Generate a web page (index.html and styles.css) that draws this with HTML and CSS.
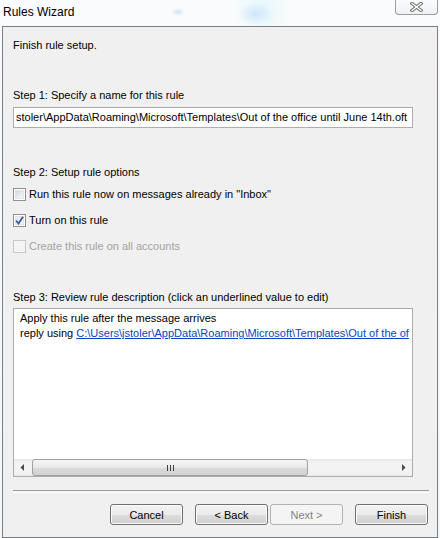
FILE: index.html
```html
<!DOCTYPE html>
<html lang="en">
<head>
  <meta charset="UTF-8">
  <title>Rules Wizard</title>
  <link rel="stylesheet" href="styles.css">
</head>
<body>

<div class="window">
  <div class="titlebar">
    <span class="title">Rules Wizard</span>
    <div class="close-btn">
      <svg width="13" height="10" viewBox="0 0 13 10">
        <path d="M2 1.5 L11 8.5 M11 1.5 L2 8.5" stroke="#6e6e6e" stroke-width="3.4" stroke-linecap="square"/>
        <path d="M2 1.5 L11 8.5 M11 1.5 L2 8.5" stroke="#ffffff" stroke-width="1.4" stroke-linecap="square"/>
      </svg>
    </div>
  </div>

  <div class="client">
    <p class="intro">Finish rule setup.</p>

    <div class="step-label step1">Step 1: Specify a name for this rule</div>
    <div class="textbox">stoler\AppData\Roaming\Microsoft\Templates\Out of the office until June 14th.oft</div>

    <div class="step-label step2">Step 2: Setup rule options</div>
    <div class="options">
      <label class="check-row">
        <span class="checkbox"></span>
        <span>Run this rule now on messages already in "Inbox"</span>
      </label>
      <label class="check-row">
        <span class="checkbox checked">
          <svg width="9" height="9" viewBox="0 0 9 9">
            <path d="M1 4.5 L3.5 7.5 L8 0.8" fill="none" stroke="#3d5a99" stroke-width="1.8"/>
          </svg>
        </span>
        <span>Turn on this rule</span>
      </label>
      <label class="check-row disabled">
        <span class="checkbox"></span>
        <span>Create this rule on all accounts</span>
      </label>
    </div>

    <div class="step-label step3">Step 3: Review rule description (click an underlined value to edit)</div>
    <div class="desc-box">
      <div class="desc-text">
        <div>Apply this rule after the message arrives</div>
        <div>reply using <a href="#">C:\Users\jstoler\AppData\Roaming\Microsoft\Templates\Out of the of</a></div>
      </div>
      <div class="hscroll">
        <div class="arrow-btn">
          <svg width="5" height="7" viewBox="0 0 5 7"><path d="M4 0 L0.5 3.5 L4 7 Z" fill="#4a4a4a"/></svg>
        </div>
        <div class="track">
          <div class="thumb">
            <span class="grip"></span><span class="grip"></span><span class="grip"></span>
          </div>
        </div>
        <div class="arrow-btn">
          <svg width="5" height="7" viewBox="0 0 5 7"><path d="M1 0 L4.5 3.5 L1 7 Z" fill="#4a4a4a"/></svg>
        </div>
      </div>
    </div>

    <div class="separator"></div>

    <div class="button-row">
      <button class="btn">Cancel</button>
      <button class="btn gap-lg">&lt; Back</button>
      <button class="btn disabled">Next &gt;</button>
      <button class="btn gap-lg">Finish</button>
    </div>
  </div>
</div>

</body>
</html>
```

FILE: styles.css
```css
body {
  margin: 0;
  font-family: "Liberation Sans", Arial, sans-serif;
  font-size: 11px;
  color: #000;
}

.window {
  width: 440px;
  height: 538px;
  display: flex;
  flex-direction: column;
  background:
    radial-gradient(ellipse 7px 4px at 178px 12px, rgba(130, 180, 235, 0.35), transparent),
    radial-gradient(ellipse 18px 11px at 255px 14px, rgba(150, 185, 240, 0.3), transparent),
    radial-gradient(ellipse 28px 30px at 262px 10px, rgba(190, 240, 250, 0.35), transparent),
    linear-gradient(to bottom, #f9fbfc, #f4f7f8);
  overflow: hidden;
}

.titlebar {
  position: relative;
  height: 26px;
  flex-shrink: 0;
}

.title {
  display: block;
  padding: 5px 0 0 3px;
  font-size: 12px;
  line-height: 15px;
  color: #000;
}

.close-btn {
  position: absolute;
  top: -3px;
  right: 2px;
  width: 43px;
  height: 18px;
  border: 1px solid #9a9fa5;
  border-top: none;
  border-radius: 0 0 4px 4px;
  background: linear-gradient(to bottom, #fdfdfd, #eef1f4);
  display: flex;
  align-items: center;
  justify-content: center;
  padding-top: 2px;
  box-sizing: border-box;
}

.client {
  flex: 1;
  margin: 0 2px 0 2px;
  border: 1px solid #7b7f84;
  background: #f0f0f0;
  padding: 11px 8px 0 10px;
  display: flex;
  flex-direction: column;
}

.intro {
  margin: 0;
  line-height: 15px;
}

.step-label {
  line-height: 15px;
}

.step1 { margin-top: 35px; }
.step2 { margin-top: 37px; }
.step3 { margin-top: 36px; }

.textbox {
  margin-top: 4px;
  width: 400px;
  height: 21px;
  box-sizing: border-box;
  border: 1px solid #abadb3;
  background: #fff;
  padding: 2px 0 0 2px;
  line-height: 15px;
  white-space: nowrap;
  overflow: hidden;
}

.options {
  margin-top: 7px;
  display: flex;
  flex-direction: column;
  gap: 11px;
}

.check-row {
  display: flex;
  align-items: center;
  gap: 3px;
  height: 15px;
  line-height: 15px;
}

.checkbox {
  width: 13px;
  height: 13px;
  box-sizing: border-box;
  border: 1px solid #8f8f8f;
  background:
    linear-gradient(135deg, #d6d9dd, #f7f7f7) 2px 2px / 7px 7px no-repeat,
    #fff;
  box-shadow: inset 0 0 0 1px #fff, inset 0 0 0 2px #e4e4e4;
  display: flex;
  align-items: center;
  justify-content: center;
}

.checkbox.checked {
  background: linear-gradient(135deg, #dfe2e6, #fbfbfb);
}

.check-row.disabled {
  color: #a3a3a3;
}

.check-row.disabled .checkbox {
  border-color: #c8c8c8;
  background: #f4f4f4;
  box-shadow: none;
}

.desc-box {
  margin-top: 3px;
  width: 400px;
  height: 169px;
  box-sizing: border-box;
  border: 1px solid #acacac;
  background: #fff;
  display: flex;
  flex-direction: column;
}

.desc-text {
  flex: 1;
  padding: 2px 0 0 6px;
  line-height: 15px;
  white-space: nowrap;
  overflow: hidden;
}

.desc-text a {
  color: #0645c8;
  text-decoration: underline;
}

.hscroll {
  height: 17px;
  display: flex;
  background: linear-gradient(to bottom, #e6e6e6, #f3f3f3 3px, #f3f3f3 14px, #e9e9e9);
}

.arrow-btn {
  width: 17px;
  display: flex;
  align-items: center;
  justify-content: center;
}

.track {
  flex: 1;
  padding: 0 1px;
}

.thumb {
  width: 276px;
  height: 17px;
  box-sizing: border-box;
  border: 1px solid #a0a0a0;
  border-radius: 3px;
  background: linear-gradient(to bottom, #f5f5f5, #e8e8e8 50%, #d9d9d9 51%, #d2d2d2);
  display: flex;
  align-items: center;
  justify-content: center;
  gap: 2px;
}

.grip {
  width: 1px;
  height: 6px;
  background: #3e3e3e;
}

.separator {
  margin-top: 13px;
  height: 1px;
  border-top: 1px solid #a0a0a0;
  border-bottom: 1px solid #fff;
}

.button-row {
  margin-top: 11px;
  margin-right: 1px;
  display: flex;
  justify-content: flex-end;
  gap: 2px;
}

.btn {
  width: 73px;
  height: 21px;
  box-sizing: border-box;
  border: 1px solid #707070;
  border-radius: 3px;
  background: linear-gradient(to bottom, #f2f2f2, #ebebeb 50%, #dddddd 51%, #cfcfcf);
  box-shadow: inset 0 0 0 1px #fbfbfb;
  font-family: "Liberation Sans", Arial, sans-serif;
  font-size: 11px;
  color: #000;
  padding: 0;
}

.btn.gap-lg {
  margin-left: 10px;
}

.btn.disabled {
  border-color: #adb2b5;
  background: #f4f4f4;
  box-shadow: none;
  color: #838383;
}
```
